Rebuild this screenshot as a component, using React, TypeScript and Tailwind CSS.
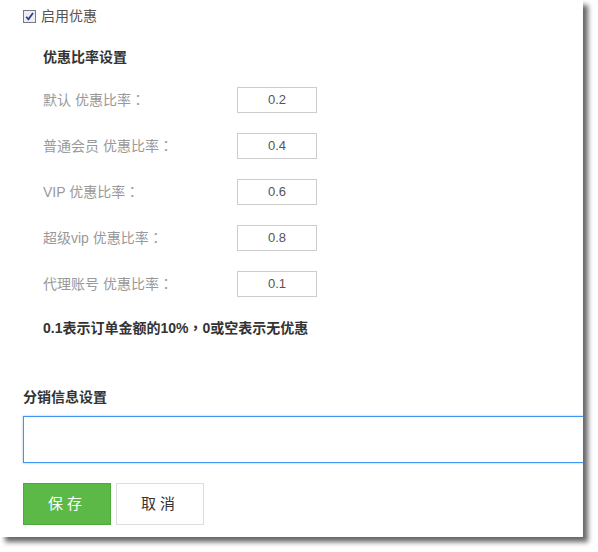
const rates = [
  { label: '默认 优惠比率', value: '0.2' },
  { label: '普通会员 优惠比率', value: '0.4' },
  { label: 'VIP 优惠比率', value: '0.6' },
  { label: '超级vip 优惠比率', value: '0.8' },
  { label: '代理账号 优惠比率', value: '0.1' },
];

const font = { fontFamily: '"Liberation Sans", "Noto Sans CJK SC", sans-serif' };
const punct = { fontFamily: '"Noto Sans CJK TC", sans-serif' };

export default function App() {
  return (
    <div className="w-[598px] h-[552px] bg-white" style={font}>
      <div className="w-[583px] h-[537px] bg-white overflow-hidden shadow-[5px_5px_5px_rgba(0,0,0,0.6)] pl-[23px] pt-[6px] text-[14px]">
        <label className="flex items-center h-[20px] gap-[5px] text-[#555]">
          <span className="w-[13px] h-[13px] border border-[#7a7a7a] bg-[#eceef3] flex items-center justify-center">
            <svg width="11" height="11" viewBox="0 0 10 10">
              <path d="M2 5.2 L4 7.6 L8.2 1.8" fill="none" stroke="#2a3d8f" strokeWidth="1.6" />
            </svg>
          </span>
          启用优惠
        </label>

        <div className="pl-[20px]">
          <h4 className="mt-[21px] h-[20px] leading-[20px] font-bold text-[#333]">优惠比率设置</h4>

          <div className="mt-[20px] flex flex-col gap-[20px]">
            {rates.map((r) => (
              <div key={r.label} className="flex items-center h-[26px]">
                <span className="w-[194px] text-[#999]">
                  {r.label}
                  <span style={punct}>：</span>
                </span>
                <div className="w-[80px] h-[26px] border border-[#ccc] flex items-center justify-center text-[13px] text-[#555]">
                  {r.value}
                </div>
              </div>
            ))}
          </div>

          <p className="mt-[20px] h-[20px] leading-[20px] font-bold text-[#333]">
            0.1表示订单金额的10%<span style={punct}>，</span>0或空表示无优惠
          </p>
        </div>

        <h4 className="mt-[50px] h-[20px] leading-[20px] font-bold text-[#333]">分销信息设置</h4>
        <div className="mt-[9px] w-[600px] h-[47px] border border-[#4096f3] shadow-[0_0_2px_#8ec2fb]" />

        <div className="mt-[20px] flex gap-[5px]">
          <button className="w-[88px] h-[42px] bg-[#5cb947] border border-[#4fa83c] text-white tracking-[4px] text-[15px]">
            保存
          </button>
          <button className="w-[88px] h-[42px] bg-white border border-[#ddd] text-[#333] tracking-[4px] text-[15px]">
            取消
          </button>
        </div>
      </div>
    </div>
  );
}
